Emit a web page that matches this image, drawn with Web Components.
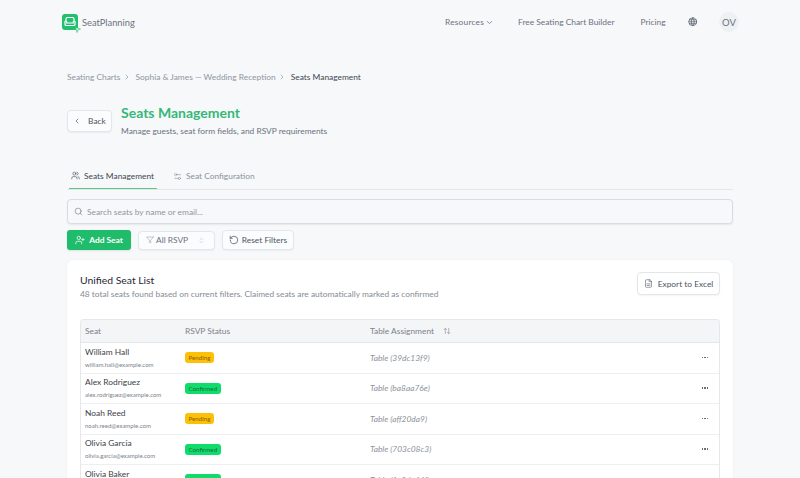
<!DOCTYPE html>
<html><head><meta charset="utf-8"><style>
html,body{margin:0;padding:0;height:478px;overflow:hidden;background:#f6f8fa;font-family:Lato,"Liberation Sans",sans-serif;color:#374151;white-space:nowrap}
</style></head><body>
<sp-page></sp-page>
<script>
const I={
chev:'<polyline points="6 9 12 15 18 9"/>',
right:'<polyline points="9 6 15 12 9 18"/>',
left:'<polyline points="15 6 9 12 15 18"/>',
globe:'<circle cx="12" cy="12" r="10"/><path d="M2 12h20M12 2a15 15 0 0 1 0 20a15 15 0 0 1 0-20"/><path d="M3.500 7h17M3.500 17h17"/>',
users:'<path d="M16 21v-2a4 4 0 0 0-4-4H6a4 4 0 0 0-4 4v2"/><circle cx="9" cy="7" r="4"/><path d="M22 21v-2a4 4 0 0 0-3-3.900M16 3.100a4 4 0 0 1 0 7.800"/>',
sliders:'<path d="M20 7h-9M14 17H5"/><circle cx="17" cy="17" r="3"/><circle cx="7" cy="7" r="3"/>',
search:'<circle cx="11" cy="11" r="8"/><path d="m21 21-4.300-4.300"/>',
userplus:'<path d="M16 21v-2a4 4 0 0 0-4-4H6a4 4 0 0 0-4 4v2"/><circle cx="9" cy="7" r="4"/><path d="M19 8v6M22 11h-6"/>',
filter:'<polygon points="22 3 2 3 10 12.500 10 19 14 21 14 12.500 22 3"/>',
updown:'<path d="m7 15 5 5 5-5M7 9l5-5 5 5"/>',
reset:'<path d="M3 12a9 9 0 1 0 9-9 9.750 9.750 0 0 0-6.740 2.740L3 8"/><path d="M3 3v5h5"/>',
file:'<path d="M15 2H6a2 2 0 0 0-2 2v16a2 2 0 0 0 2 2h12a2 2 0 0 0 2-2V7z"/><path d="M14 2v5h6M8 13h8M8 17h8"/>',
sort:'<path d="m21 16-4 4-4-4M17 20V4M3 8l4-4 4 4M7 4v16"/>'
};
const icon=(n,s,w=2)=>`<svg width="${s}" height="${s}" viewBox="0 0 24 24" fill="none" stroke="currentColor" stroke-width="${w}" stroke-linecap="round" stroke-linejoin="round" style="flex:none;display:block">${I[n]}</svg>`;
const def=(name,html)=>customElements.define(name,class extends HTMLElement{constructor(){super();this.attachShadow({mode:'open'});}connectedCallback(){if(!this._d){this.shadowRoot.innerHTML=typeof html==='function'?html(this):html;this._d=1}}});

def('sp-header',`<style>
:host{display:flex;align-items:center;justify-content:space-between;height:44px;padding:0 61px 0 62px}
.logo{display:flex;align-items:center;gap:4px;position:relative;color:#6b7280;font-size:9.300px}
.box{width:16px;height:16px}
.cur{position:absolute;left:13px;top:13px}
nav{display:flex;align-items:center;font-size:8.400px;color:#6b7280}
.a{display:flex;align-items:center;gap:1px}
.g{color:#4b5563;margin:0 22px 0 22px}
.av{width:20px;height:20px;border-radius:50%;background:#eef1f3;display:flex;align-items:center;justify-content:center;font-size:9.500px;color:#6b7280}
</style>
<div class="logo"><svg class="box" viewBox="0 0 16 16"><rect width="16" height="16" rx="3" fill="#22c06e"/><path d="M4 6.500V5a1.500 1.500 0 0 1 1.500-1.500h5A1.500 1.500 0 0 1 12 5v1.500M3.500 7a1 1 0 0 1 1.200 1v1h6.600V8a1 1 0 0 1 1.200-1a1 1 0 0 1 .5 1v2.500a1 1 0 0 1-1 1H4a1 1 0 0 1-1-1V8a1 1 0 0 1 .5-1z" fill="none" stroke="#fff" stroke-width="1.200"/></svg>
<svg class="cur" width="6" height="6" viewBox="0 0 6 6"><path d="M.5.5 5.500 2 3 3 2 5.500z" fill="#d9f5e5" stroke="#22c06e" stroke-width=".6"/></svg>
<span>SeatPlanning</span></div>
<nav><span class="a" style="margin-right:24px;letter-spacing:.2px">Resources ${icon('chev',9)}</span><span class="a" style="margin-right:26px">Free Seating Chart Builder</span><span class="a">Pricing</span><span class="g">${icon('globe',9.500,1.700)}</span><span class="av">OV</span></nav>`);

def('sp-crumbs',`<style>
:host{display:flex;align-items:center;font-size:8.400px;color:#9096a0;height:12px}
b{font-weight:400;color:#3f4753}
svg{margin:0 5px 0 2px}
</style><span>Seating Charts</span>${icon('right',8)}<span>Sophia &amp; James — Wedding Reception</span>${icon('right',8)}<b>Seats Management</b>`);

def('sp-btn',`<style>
:host{display:inline-flex;align-items:center;justify-content:center;gap:5px;box-sizing:border-box;border:1px solid #e3e6ea;border-radius:4px;background:#fbfcfd;font-size:8.400px;color:#4b5563;box-shadow:0 1px 1.500px rgba(0,0,0,.05)}
</style><slot></slot>`);

def('sp-titlebar',`<style>
:host{display:flex;align-items:flex-start;gap:9px}
sp-btn{width:45px;height:22px;margin-top:5px}
h1{margin:0;font-size:14px;font-weight:700;color:#35b877;line-height:16px}
p{margin:5px 0 0;font-size:8.400px;color:#6b7280;line-height:11px}
</style><sp-btn>${icon('left',8)}<span style="margin-left:2px">Back</span></sp-btn><div><h1>Seats Management</h1><p>Manage guests, seat form fields, and RSVP requirements</p></div>`);

def('sp-tabs',`<style>
:host{display:flex;height:26px;border-bottom:1px solid #e5e7eb;font-size:8.400px}
.t{display:flex;align-items:center;gap:4px;height:26px;box-sizing:border-box}
.on{width:88px;margin:0 16px 0 2px;padding-left:2px;color:#3f4753;border-bottom:1.500px solid #5cc48c}
.off{color:#8b929b}
</style><div class="t on">${icon('users',9,1.600)}<span>Seats Management</span></div><div class="t off">${icon('sliders',9,1.600)}<span>Seat Configuration</span></div>`);

def('sp-search',`<style>
:host{display:flex;align-items:center;gap:4px;height:25px;box-sizing:border-box;padding:0 6px;border:1px solid #d9dde1;border-radius:4px;background:#f7f8f9;font-size:8.400px;color:#9096a0;box-shadow:0 1px 2px rgba(0,0,0,.07)}
span{color:#6b7280;display:flex}
</style><span>${icon('search',9,1.600)}</span>Search seats by name or email...`);

def('sp-filters',`<style>
:host{display:flex;align-items:center;gap:7px;height:20px}
.add{width:64px;height:20px;background:#1fbc6c;color:#fff;border-radius:3px;display:flex;align-items:center;justify-content:center;gap:4px;font-size:8.400px;font-weight:700;box-shadow:0 1px 2px rgba(0,0,0,.1)}
.sel{width:77px;height:19px;gap:2px;justify-content:flex-start;padding:0 9px 0 7px;color:#6b7280}
.rs{width:72px;height:20px;gap:3px}
.f{color:#8b929b;display:flex}
</style><div class="add">${icon('userplus',10,1.800)}<span>Add Seat</span></div>
<sp-btn class="sel"><span class="f">${icon('filter',8,1.500)}</span><span>All RSVP</span><span style="flex:1"></span><span class="f" style="color:#a5abb3">${icon('updown',7,1.500)}</span></sp-btn>
<sp-btn class="rs">${icon('reset',10,1.800)}<span>Reset Filters</span></sp-btn>`);

def('sp-badge',h=>{const c=h.getAttribute('kind')==='c';return `<style>
:host{display:inline-flex;align-items:center;height:11px;padding:0 3.500px;border-radius:3px;font-size:6.200px;background:${c?'#0fdc6a':'#fdc008'};color:${c?'#0f6b3a':'#8a6100'}}
</style><slot></slot>`});

def('sp-row',h=>{const g=h.getAttribute.bind(h);return `<style>
:host{display:grid;grid-template-columns:100px 185px 1fr 30px;align-items:center;height:30.500px;box-sizing:border-box;border-bottom:1px solid #eceef1;padding-left:4px}
.n{font-size:8.400px;color:#3c4148;line-height:11px}
.e{font-size:6px;color:#7b828c;line-height:8px;margin-top:3px}
.b{display:flex}
.t{font-size:8.400px;font-style:italic;color:#8d939c}
.d{display:flex;gap:1.200px;justify-content:center;margin-top:-1px;padding-left:2px}
.d i{width:1.500px;height:1.500px;background:#4b5563;border-radius:50%}
</style><div><div class="n">${g('name')}</div><div class="e">${g('email')}</div></div><div class="b"><sp-badge kind="${g('kind')}">${g('kind')==='c'?'Confirmed':'Pending'}</sp-badge></div><div class="t">Table (${g('tbl')})</div><div class="d"><i></i><i></i><i></i></div>`});

def('sp-table',`<style>
:host{display:block;border:1px solid #e5e7eb;border-bottom:0;border-radius:4px 4px 0 0;overflow:hidden}
.h{display:grid;grid-template-columns:100px 185px 1fr;align-items:center;height:22px;padding-left:4px;background:#f4f5f7;border-bottom:1px solid #e5e7eb;font-size:8.400px;color:#7b828c}
.s{display:flex;align-items:center;gap:9px}
</style><div class="h"><span>Seat</span><span>RSVP Status</span><span class="s">Table Assignment ${icon('sort',8,1.600)}</span></div><slot></slot>`);

def('sp-card',`<style>
:host{display:block;background:#fff;border-radius:6px 6px 0 0;padding:13px 13px 0;margin-top:10px;box-shadow:0 0 3px rgba(0,0,0,.05)}
.top{display:flex;justify-content:space-between;align-items:flex-start;height:33px}
h2{margin:0;font-size:10.400px;font-weight:400;color:#1f2937;line-height:14px}
p{margin:2px 0 0;font-size:8.400px;color:#858b95;line-height:11px}
sp-btn{width:83px;height:23px;background:#fff;margin-top:-1px}
</style><div class="top"><div><h2>Unified Seat List</h2><p>48 total seats found based on current filters. Claimed seats are automatically marked as confirmed</p></div><sp-btn>${icon('file',9,1.500)}<span>Export to Excel</span></sp-btn></div><slot></slot>`);

def('sp-page',`<style>
:host{display:block}
main{padding:0 67px}
sp-crumbs{margin-top:27px}
sp-titlebar{margin-top:22px}
sp-tabs{margin-top:26px}
sp-search{margin-top:9px}
sp-filters{margin-top:6px}
sp-table{margin-top:13px}
</style><sp-header></sp-header><main><sp-crumbs></sp-crumbs><sp-titlebar></sp-titlebar><sp-tabs></sp-tabs><sp-search></sp-search><sp-filters></sp-filters>
<sp-card><sp-table>
<sp-row name="William Hall" email="william.hall@example.com" kind="p" tbl="39dc13f9"></sp-row>
<sp-row name="Alex Rodriguez" email="alex.rodriguez@example.com" kind="c" tbl="ba8aa76e"></sp-row>
<sp-row name="Noah Reed" email="noah.reed@example.com" kind="p" tbl="aff20da9"></sp-row>
<sp-row name="Olivia Garcia" email="olivia.garcia@example.com" kind="c" tbl="703c08c3"></sp-row>
<sp-row name="Olivia Baker" email="olivia.baker@example.com" kind="c" tbl="1c3da44f"></sp-row>
</sp-table></sp-card></main>`);
</script></body></html>
